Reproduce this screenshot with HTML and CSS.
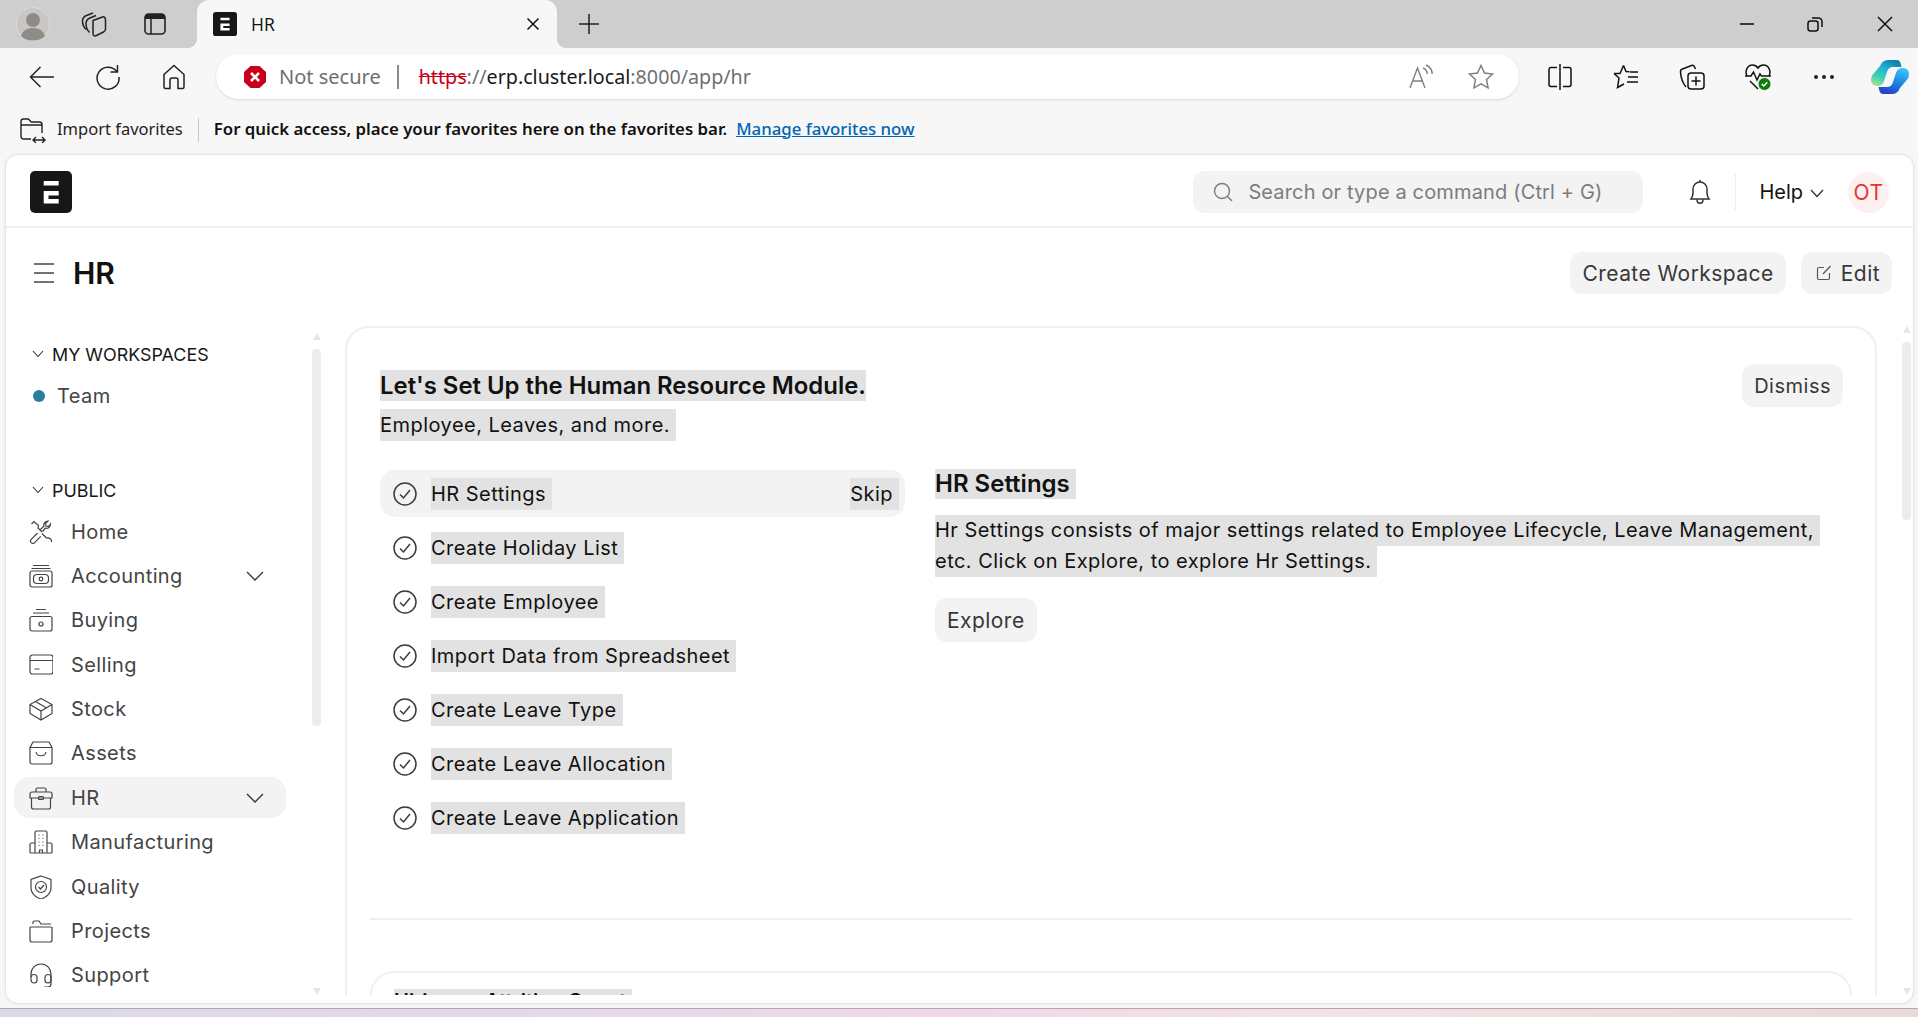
FILE: index.html
```html
<!DOCTYPE html>
<html lang="en">
<head>
    <meta charset="UTF-8">
    <title>HR</title>
    <link rel="stylesheet" href="styles.css">
</head>
<body>

<svg class="sprite" width="0" height="0">
    <defs>
        <linearGradient id="copA" x1="0.7" y1="0" x2="0.2" y2="1">
            <stop offset="0" stop-color="#0f7fa8"/>
            <stop offset="0.35" stop-color="#1fb0d8"/>
            <stop offset="0.75" stop-color="#48d6b0"/>
            <stop offset="1" stop-color="#a6e58a"/>
        </linearGradient>
        <linearGradient id="copB" x1="0.7" y1="0" x2="0.3" y2="1">
            <stop offset="0" stop-color="#3cc4f4"/>
            <stop offset="0.55" stop-color="#1c7fe0"/>
            <stop offset="1" stop-color="#2a3fc8"/>
        </linearGradient>
    </defs>
</svg>

<!-- browser chrome -->
<div class="tabstrip">
    <div class="strip-btn">
        <svg class="avatar" width="34" height="34" viewBox="0 0 34 34"><circle cx="17" cy="17" r="16.5" fill="#c9c7c3" stroke="#dcdad6"/><circle cx="17" cy="13" r="7" fill="#8f8c87"/><path d="M5 29c2-6 7-8 12-8s10 2 12 8c-3 3-7 4.500-12 4.500S8 32 5 29z" fill="#8f8c87"/></svg>
    </div>
    <div class="strip-btn">
        <svg width="26" height="28" viewBox="0 0 26 28" fill="none" stroke="#222" stroke-width="1.500"><path d="M5 19.500C2.500 17 1.500 14 1.500 11c0-3 1.500-4.500 4-5.500L12 3"/><path d="M8.500 22.500C6 20 5 17 5 13.500c0-3 1.500-4.500 4-5.500l6-2.500"/><path d="M12 10.500 21.500 7c1.500-.5 3 .5 3 2.500V19c0 1.500-.8 2.500-2 3l-7 3.500c-2 1-3.500 0-3.500-2z"/></svg>
    </div>
    <div class="strip-btn">
        <svg width="22" height="22" viewBox="0 0 22 22"><rect x="1" y="1" width="20" height="20" rx="3.500" fill="none" stroke="#222" stroke-width="1.600"/><path d="M1 4.500A3.500 3.500 0 0 1 4.500 1h13A3.500 3.500 0 0 1 21 4.500V6H1z" fill="#222"/><path d="M7 6v15" stroke="#222" stroke-width="1.500"/></svg>
    </div>
    <div class="tab">
        <svg class="tab-logo" width="24" height="24" viewBox="0 0 42 42"><rect width="42" height="42" rx="5" fill="#171717"/><path d="M13 10h16v4.500H13zM13 20h16v4.500H18v3.500h11v4.500H13z" fill="#fff"/></svg>
        <span class="tab-title">HR</span>
        <svg class="tab-close" width="14" height="14" viewBox="0 0 14 14"><path d="M1.500 1.500l11 11M12.500 1.500l-11 11" stroke="#111" stroke-width="1.500"/></svg>
    </div>
    <div class="new-tab">
        <svg width="20" height="20" viewBox="0 0 20 20"><path d="M10 0v20M0 10h20" stroke="#222" stroke-width="1.500"/></svg>
    </div>
    <div class="win-controls">
        <div class="win-btn"><svg width="16" height="16" viewBox="0 0 16 16"><path d="M1 8h14" stroke="#111" stroke-width="1.600"/></svg></div>
        <div class="win-btn"><svg width="16" height="16" viewBox="0 0 16 16" fill="none" stroke="#111" stroke-width="1.500"><rect x="1" y="5" width="10" height="10" rx="2.500"/><path d="M5 2h6.500A3.500 3.500 0 0 1 15 5.500V11"/></svg></div>
        <div class="win-btn win-close"><svg width="16" height="16" viewBox="0 0 16 16"><path d="M1 1l14 14M15 1L1 15" stroke="#111" stroke-width="1.500"/></svg></div>
    </div>
</div>

<div class="toolbar">
    <div class="tool-btn">
        <svg width="26" height="24" viewBox="0 0 26 24" fill="none" stroke="#222" stroke-width="1.500"><path d="M25 12H1.500M11.500 2 1.500 12l10 10"/></svg>
    </div>
    <div class="tool-btn">
        <svg width="26" height="26" viewBox="0 0 26 26" fill="none" stroke="#222" stroke-width="1.500"><path d="M21.800 7.500A11 11 0 1 0 24 13"/><path d="M22.500 1v7h-7"/></svg>
    </div>
    <div class="tool-btn">
        <svg width="24" height="26" viewBox="0 0 24 26" fill="none" stroke="#222" stroke-width="1.500"><path d="M2 10.500 12 1.500l10 9V23a1.500 1.500 0 0 1-1.500 1.500H16V16a2 2 0 0 0-2-2h-4a2 2 0 0 0-2 2v8.500H3.500A1.500 1.500 0 0 1 2 23z"/></svg>
    </div>
    <div class="address">
        <svg class="sec-icon" width="22" height="24" viewBox="0 0 22 24"><path d="M6.500 1h9L22 7v10l-6.500 6h-9L0 17V7z" fill="#c8001a"/><path d="M7 8l8 8M15 8l-8 8" stroke="#fff" stroke-width="2.600"/></svg>
        <span class="sec-text">Not secure</span>
        <span class="addr-sep"></span>
        <span class="url"><span class="url-https">https</span><span class="url-dim">://</span>erp.cluster.local<span class="url-dim">:8000/app/hr</span></span>
        <div class="addr-icons">
            <svg width="26" height="26" viewBox="0 0 26 26" fill="none" stroke="#808080" stroke-width="1.400"><path d="M1 24 8.500 4l7.500 20M3.800 17h9.400"/><path d="M14 4c2.500 1 4 3 4.300 6M17 1c3.500 1.500 6 4.500 6.300 9"/></svg>
            <svg width="26" height="26" viewBox="0 0 26 26" fill="none" stroke="#808080" stroke-width="1.500"><path d="M13 1.500l3.500 7.500 8 1-6 5.500 1.600 8.300-7.100-4-7.100 4 1.600-8.300-6-5.500 8-1z"/></svg>
        </div>
    </div>
    <div class="tool-icons">
        <div class="tool-icon"><svg width="24" height="26" viewBox="0 0 24 26" fill="none" stroke="#111" stroke-width="1.500"><path d="M9 3.500H3A2 2 0 0 0 1 5.500v15a2 2 0 0 0 2 2h6M15 3.500h6a2 2 0 0 1 2 2v15a2 2 0 0 1-2 2h-6"/><path d="M12 0v26"/></svg></div>
        <div class="tool-icon"><svg width="26" height="26" viewBox="0 0 26 26" fill="none" stroke="#111" stroke-width="1.500"><path d="M10.500 1.500l2.500 6 3.500.3M1 9.500l6 .1L10.500 1.500M1 9.500l5 4.500-1.500 9.500 6.500-3.500"/><path d="M17 8h8M15 13h10M14 18h11"/></svg></div>
        <div class="tool-icon"><svg width="26" height="28" viewBox="0 0 26 28" fill="none" stroke="#111" stroke-width="1.500"><path d="M7 24C4.500 21 2 16 1.500 9c-.2-1.500.5-2.500 2-3l9-3.500c1.200-.4 2.200 0 2.800 1l1.200 2.500"/><rect x="9" y="10" width="16" height="16" rx="3"/><path d="M17 13.500v9M12.500 18h9"/></svg></div>
        <div class="tool-icon"><svg width="26" height="28" viewBox="0 0 26 28" fill="none"><path d="M2 13C-.5 8 2.500 2 7.500 2c2.500 0 4.500 1.500 5.500 3 1-1.500 3-3 5.500-3 5 0 8 6 5.500 11M5 18l8 8" stroke="#111" stroke-width="1.500"/><path d="M0 13h6l2.500-4 3.500 8 3-6 1.500 2H26" stroke="#111" stroke-width="1.500"/><circle cx="19.500" cy="21" r="6.500" fill="#107c10" stroke="#f7f7f7" stroke-width="1"/><path d="M16.800 21l2 2 3.500-3.800" stroke="#fff" stroke-width="1.500"/></svg></div>
        <div class="tool-icon"><svg width="22" height="6" viewBox="0 0 22 6" fill="#222"><circle cx="3" cy="3" r="2"/><circle cx="11" cy="3" r="2"/><circle cx="19" cy="3" r="2"/></svg></div>
        <div class="tool-icon"><svg width="38" height="36" viewBox="0 0 38 36"><path d="M29 29c-1.500 4-4.500 6-8 6h-9c-1.500 0-3-1-3.500-3l-1-4H16c3 0 5-1.500 6-5l3-9c1-3 3-5 7-5 4 0 6 3 6 6 0 1.500-.5 3-1 4.500z" fill="url(#copB)"/><path d="M9 7C10.500 3 13.500 1 17 1h9c1.500 0 3 1 3.500 3l1 4H22c-3 0-5 1.500-6 5l-3 9c-1 3-3 5-7 5-4 0-6-3-6-6 0-1.500.5-3 1-4.500z" fill="url(#copA)"/></svg></div>
    </div>
</div>

<div class="favbar">
    <svg width="26" height="26" viewBox="0 0 26 26" fill="none" stroke="#222" stroke-width="1.400"><path d="M11 22H3.500A2.500 2.500 0 0 1 1 19.500v-15A2.500 2.500 0 0 1 3.500 2h4.800l3 3h8.200A2.500 2.500 0 0 1 22 7.500V16"/><path d="M1 8h21M13 23h12M16 20l-3 3 3 3M22 20l3 3-3 3"/></svg>
    <span class="fav-import">Import favorites</span>
    <span class="fav-sep"></span>
    <b class="fav-msg">For quick access, place your favorites here on the favorites bar.</b>
    <span class="fav-link">Manage favorites now</span>
</div>

<!-- the app -->
<div class="page">
    <div class="navbar">
        <svg class="logo" width="42" height="42" viewBox="0 0 42 42"><rect width="42" height="42" rx="5" fill="#171717"/><path d="M13.700 10h15v4.500h-15zM13.700 20h15v4.500H18.500v3.500h10.200v4.500h-15z" fill="#fff"/></svg>
        <div class="search">
            <svg width="20" height="20" viewBox="0 0 20 20" fill="none" stroke="#7c7c7c" stroke-width="1.400"><circle cx="9" cy="9" r="7.500"/><path d="M14.500 14.500 19 19"/></svg>
            <span>Search or type a command (Ctrl + G)</span>
        </div>
        <svg class="bell" width="22" height="26" viewBox="0 0 22 26" fill="none" stroke="#333" stroke-width="1.500"><path d="M2 20c1.500-2 2-3.500 2-6V10a7 7 0 0 1 14 0v4c0 2.500.5 4 2 6z"/><path d="M8 20.500c0 5 6 5 6 0M11 1v2"/></svg>
        <span class="nav-sep"></span>
        <span class="help">Help</span>
        <svg class="help-chev" width="14" height="9" viewBox="0 0 14 9" fill="none" stroke="#333" stroke-width="1.300"><path d="M1 1l6 6.500L13 1"/></svg>
        <span class="user">OT</span>
    </div>

    <div class="head">
        <svg class="burger" width="20" height="20" viewBox="0 0 20 20" stroke="#444" stroke-width="1.500"><path d="M0 1h20M0 10h20M0 19h20"/></svg>
        <h1 class="head-title">HR</h1>
        <div class="head-actions">
            <span class="btn btn-big">Create Workspace</span>
            <span class="btn btn-big btn-edit">
                <svg width="16" height="16" viewBox="0 0 16 16" fill="none" stroke="#555" stroke-width="1.200"><path d="M8 2.500H3A1.500 1.500 0 0 0 1.500 4v9A1.500 1.500 0 0 0 3 14.500h9a1.500 1.500 0 0 0 1.500-1.500V8M7 9l7.500-8"/></svg>
                Edit
            </span>
        </div>
    </div>

    <div class="body">
        <div class="sidebar">
            <div class="nav">
                <div class="sec-title">
                    <svg width="12" height="8" viewBox="0 0 12 8" fill="none" stroke="#333" stroke-width="1.100"><path d="M1 1l5 5.500L11 1"/></svg>
                    MY WORKSPACES
                </div>
                <div class="team"><i class="team-dot"></i>Team</div>

                <div class="sec-title sec-public">
                    <svg width="12" height="8" viewBox="0 0 12 8" fill="none" stroke="#333" stroke-width="1.100"><path d="M1 1l5 5.500L11 1"/></svg>
                    PUBLIC
                </div>

                <div class="row">
                    <svg class="row-icon" viewBox="0 0 24 24"><path d="M2.500 4 5 1.500l4.500 4-.5 2.500 4 4M11.500 9.500l3.500-3.500c-.8-2.500 1-5 4-5l-2.500 2.500.5 2.500 2.500.5L21.500 4c0 3-2.500 5-5 4l-3 3.500M8.500 13 2.200 19.300a2.400 2.400 0 0 0 3.400 3.400l6.200-6.300M13 13.500l4.500 4.500c2.800-.8 5.300 1 5 4"/></svg>
                    <span>Home</span>
                </div>
                <div class="row">
                    <svg class="row-icon" viewBox="0 0 24 24"><path d="M4 1.500h16M2.500 4.500h19"/><rect x="1" y="7" width="22" height="16" rx="2"/><rect x="4.500" y="10.500" width="15" height="9" rx="3.500"/><circle cx="12" cy="15" r="1.800"/></svg>
                    <span>Accounting</span>
                    <svg class="row-chev" width="18" height="10" viewBox="0 0 18 10" fill="none" stroke="#333" stroke-width="1.300"><path d="M1 1l8 8 8-8"/></svg>
                </div>
                <div class="row">
                    <svg class="row-icon" viewBox="0 0 24 24"><path d="M7 1.500h10M4 5h16"/><rect x="1" y="8.500" width="22" height="14.500" rx="2"/><circle cx="12" cy="16" r="2"/></svg>
                    <span>Buying</span>
                </div>
                <div class="row">
                    <svg class="row-icon" viewBox="0 0 24 24"><rect x="1" y="2" width="23" height="19" rx="2.500"/><path d="M1 7.500h23M5.500 16h5"/></svg>
                    <span>Selling</span>
                </div>
                <div class="row">
                    <svg class="row-icon" viewBox="0 0 24 24"><path d="M12 1.500 23 7.500v9L12 23 1 16.500v-9zM1 7.500l11 6.500 11-6.500M12 14v9M6.500 4.500 17.500 11"/></svg>
                    <span>Stock</span>
                </div>
                <div class="row">
                    <svg class="row-icon" viewBox="0 0 24 24"><path d="M4 1h16l3 5.500V21a2 2 0 0 1-2 2H3a2 2 0 0 1-2-2V6.500zM1 6.500h22M7 11c1 5 9 5 10 0"/></svg>
                    <span>Assets</span>
                </div>
                <div class="row row-active">
                    <svg class="row-icon" viewBox="0 0 24 24"><path d="M7 6V3.500A1.500 1.500 0 0 1 8.500 2h7A1.500 1.500 0 0 1 17 3.500V6"/><path d="M1 8a2 2 0 0 1 2-2h18a2 2 0 0 1 2 2v4H1zM2.500 12v9a2 2 0 0 0 2 2h15a2 2 0 0 0 2-2v-9"/><rect x="9.500" y="10.500" width="5" height="3" rx="1"/></svg>
                    <span>HR</span>
                    <svg class="row-chev" width="18" height="10" viewBox="0 0 18 10" fill="none" stroke="#333" stroke-width="1.300"><path d="M1 1l8 8 8-8"/></svg>
                </div>
                <div class="row">
                    <svg class="row-icon" viewBox="0 0 24 24"><path d="M6 23V2.500A1.500 1.500 0 0 1 7.500 1h9A1.500 1.500 0 0 1 18 2.500V23M1 23h22M6 13H2.500A1.500 1.500 0 0 0 1 14.500V23M18 13h3.500a1.500 1.500 0 0 1 1.500 1.500V23M10.500 23v-3h3v3"/><path d="M9.500 5h1M13.500 5h1M9.500 8.500h1M13.500 8.500h1M9.500 12h1M13.500 12h1M9.500 15.500h1M13.500 15.500h1"/></svg>
                    <span>Manufacturing</span>
                </div>
                <div class="row">
                    <svg class="row-icon" viewBox="0 0 24 24"><path d="M12 1 22 4.500V13c0 5-4 9-10 11C6 22 2 18 2 13V4.500z"/><circle cx="12" cy="12" r="5.500"/><path d="M9.500 12l2 2 3.500-4"/></svg>
                    <span>Quality</span>
                </div>
                <div class="row">
                    <svg class="row-icon" viewBox="0 0 24 24"><path d="M4 5V3.500A1.500 1.500 0 0 1 5.500 2H10l2 3h10M1 8h21.500M1 8v13a2 2 0 0 0 2 2h18a2 2 0 0 0 2-2V8"/></svg>
                    <span>Projects</span>
                </div>
                <div class="row">
                    <svg class="row-icon" viewBox="0 0 24 24"><path d="M2 14V11a10 10 0 0 1 20 0v3M15 24h4a3 3 0 0 0 3-3v-7"/><path d="M2 14.500a3 3 0 0 1 6 0V17a3 3 0 0 1-6 0zM16 14.500a3 3 0 0 1 6 0V17a3 3 0 0 1-6 0z"/></svg>
                    <span>Support</span>
                </div>
            </div>
            <div class="scroll scroll-side">
                <i class="arrow-up"></i>
                <i class="thumb thumb-side"></i>
                <i class="arrow-down"></i>
            </div>
        </div>

        <div class="main">
            <div class="card">
                <div class="onboard">
                    <div class="onboard-head">
                        <div class="onboard-text">
                            <div class="sel onboard-title">Let's Set Up the Human Resource Module.</div>
                            <div class="sel onboard-sub">Employee, Leaves, and more.</div>
                        </div>
                        <span class="btn btn-dismiss">Dismiss</span>
                    </div>
                    <div class="onboard-body">
                        <div class="steps">
                            <div class="step step-active">
                                <svg class="check" viewBox="0 0 24 24"><circle cx="12" cy="12" r="11"/><path d="M7 12.500l3.500 3.500 6.500-8"/></svg>
                                <span class="sel">HR Settings</span>
                                <span class="sel step-skip">Skip</span>
                            </div>
                            <div class="step">
                                <svg class="check" viewBox="0 0 24 24"><circle cx="12" cy="12" r="11"/><path d="M7 12.500l3.500 3.500 6.500-8"/></svg>
                                <span class="sel">Create Holiday List</span>
                            </div>
                            <div class="step">
                                <svg class="check" viewBox="0 0 24 24"><circle cx="12" cy="12" r="11"/><path d="M7 12.500l3.500 3.500 6.500-8"/></svg>
                                <span class="sel">Create Employee</span>
                            </div>
                            <div class="step">
                                <svg class="check" viewBox="0 0 24 24"><circle cx="12" cy="12" r="11"/><path d="M7 12.500l3.500 3.500 6.500-8"/></svg>
                                <span class="sel">Import Data from Spreadsheet</span>
                            </div>
                            <div class="step">
                                <svg class="check" viewBox="0 0 24 24"><circle cx="12" cy="12" r="11"/><path d="M7 12.500l3.500 3.500 6.500-8"/></svg>
                                <span class="sel">Create Leave Type</span>
                            </div>
                            <div class="step">
                                <svg class="check" viewBox="0 0 24 24"><circle cx="12" cy="12" r="11"/><path d="M7 12.500l3.500 3.500 6.500-8"/></svg>
                                <span class="sel">Create Leave Allocation</span>
                            </div>
                            <div class="step">
                                <svg class="check" viewBox="0 0 24 24"><circle cx="12" cy="12" r="11"/><path d="M7 12.500l3.500 3.500 6.500-8"/></svg>
                                <span class="sel">Create Leave Application</span>
                            </div>
                        </div>
                        <div class="detail">
                            <div class="sel detail-title">HR Settings</div>
                            <div class="detail-desc">
                                <div class="sel">Hr Settings consists of major settings related to Employee Lifecycle, Leave Management,</div>
                                <div class="sel">etc. Click on Explore, to explore Hr Settings.</div>
                            </div>
                            <span class="btn btn-big btn-explore">Explore</span>
                        </div>
                    </div>
                </div>
                <div class="divider"></div>
                <div class="chart-card">
                    <div class="sel chart-title">Hiring vs Attrition Count</div>
                </div>
            </div>
            <div class="scroll scroll-main">
                <i class="arrow-up"></i>
                <i class="thumb thumb-main"></i>
                <i class="arrow-down"></i>
            </div>
        </div>
    </div>
</div>

<div class="desktop"></div>

</body>
</html>
```

FILE: styles.css
```css
* {
    box-sizing: border-box;
}

html, body {
    height: 100%;
}

body {
    margin: 0;
    height: 1017px;
    overflow: hidden;
    display: flex;
    flex-direction: column;
    background-color: #f7f7f7;
    color: #111;
    font-family: Inter, "Liberation Sans", sans-serif;
}

svg {
    display: block;
    flex: none;
}

.sprite {
    position: absolute;
}

/* browser chrome */
.tabstrip {
    flex: none;
    height: 48px;
    display: flex;
    align-items: center;
    gap: 11px;
    padding-left: 8px;
    background-color: #cecece;
}

.strip-btn {
    width: 50px;
    display: flex;
    justify-content: center;
}

.tab {
    position: relative;
    align-self: stretch;
    width: 360px;
    margin-left: 6px;
    padding: 0 17px 0 16px;
    display: flex;
    align-items: center;
    background-color: #f7f7f7;
    border-radius: 12px 12px 0 0;
}

.tab::before,
.tab::after {
    content: "";
    position: absolute;
    bottom: 0;
    width: 10px;
    height: 10px;
}

.tab::before {
    left: -10px;
    background: radial-gradient(circle at 0 0, transparent 10px, #f7f7f7 10.500px);
}

.tab::after {
    right: -10px;
    background: radial-gradient(circle at 100% 0, transparent 10px, #f7f7f7 10.500px);
}

.tab-title {
    margin-left: 14px;
    font: 17.500px "Open Sans", sans-serif;
}

.tab-close {
    margin-left: auto;
}

.new-tab {
    width: 22px;
    margin-left: 11px;
}

.win-controls {
    margin-left: auto;
    margin-right: 2px;
    display: flex;
}

.win-btn {
    width: 68px;
    display: flex;
    justify-content: center;
}

.win-close {
    width: 67px;
    justify-content: flex-end;
    padding-right: 23px;
}

.toolbar {
    flex: none;
    height: 57px;
    display: flex;
    align-items: center;
    gap: 16px;
    padding: 0 0 0 17px;
}

.tool-btn {
    width: 50px;
    display: flex;
    justify-content: center;
}

.address {
    width: 1303px;
    height: 45px;
    margin: 0 0 0 1px;
    padding: 0 25px 0 28px;
    display: flex;
    align-items: center;
    background-color: #fff;
    border-radius: 23px;
    box-shadow: 0 1px 3px rgba(0, 0, 0, .12);
}

.sec-text {
    margin-left: 13px;
    color: #6f6f6f;
    font: 20px "Noto Sans", sans-serif;
}

.addr-sep {
    width: 2px;
    height: 24px;
    margin: 0 20px 0 16px;
    background-color: #8a8a8a;
}

.url {
    font: 19.700px "Noto Sans", sans-serif;
    color: #1a1a1a;
}

.url-https {
    color: #c8001a;
    text-decoration: line-through;
}

.url-dim {
    color: #6f6f6f;
}

.addr-icons {
    margin-left: auto;
    display: flex;
    gap: 33px;
}

.tool-icons {
    margin-left: 3px;
    display: flex;
    gap: 22px;
}

.tool-icon {
    width: 44px;
    height: 40px;
    display: flex;
    align-items: center;
    justify-content: center;
}

.favbar {
    flex: none;
    height: 50px;
    padding: 0 0 4px 20px;
    display: flex;
    align-items: center;
    font: 16.800px "Noto Sans", sans-serif;
}

.favbar svg {
    margin-top: 4px;
}

.fav-import {
    margin-left: 11px;
    color: #222;
    font-size: 16.500px;
}

.fav-sep {
    width: 1px;
    height: 24px;
    margin: 4px 15px 0;
    background-color: #c8c8c8;
}

.fav-msg {
    font-weight: 600;
}

.fav-link {
    margin-left: 9px;
    color: #0066b4;
    font-weight: 500;
    text-decoration: underline;
}

/* the app */
.page {
    flex: none;
    height: 848px;
    margin: 0 5px 0 6px;
    display: flex;
    flex-direction: column;
    background-color: #fff;
    border-radius: 12px;
    box-shadow: 0 0 3px rgba(0, 0, 0, .2);
}

.navbar {
    flex: none;
    height: 73px;
    padding: 3px 24px 0;
    display: flex;
    align-items: center;
    border-bottom: 2px solid #efefef;
}

.search {
    width: 450px;
    height: 42px;
    margin-left: auto;
    padding-left: 20px;
    display: flex;
    align-items: center;
    gap: 15px;
    background-color: #f3f3f3;
    border-radius: 12px;
    color: #7c7c7c;
    font-size: 20px;
    letter-spacing: .15px;
}

.bell {
    margin-left: 46px;
}

.nav-sep {
    width: 1px;
    height: 36px;
    margin: 0 23px 0 24px;
    background-color: #ececec;
}

.help {
    font-size: 20px;
}

.help-chev {
    margin: 2px 0 0 7px;
}

.user {
    width: 41px;
    height: 41px;
    margin-left: 24px;
    display: flex;
    align-items: center;
    justify-content: center;
    background-color: #fff0f0;
    border-radius: 50%;
    color: #e03636;
    font-size: 21px;
    letter-spacing: .5px;
}

.head {
    flex: none;
    height: 98px;
    padding: 24px 21px 0 28px;
    display: flex;
    align-items: flex-start;
}

.burger {
    margin-top: 11px;
}

.head-title {
    margin: 0 0 0 19px;
    font-size: 30px;
    font-weight: 600;
    line-height: 42px;
}

.head-actions {
    margin-left: auto;
    display: flex;
    gap: 15px;
}

.btn {
    height: 42px;
    padding: 0 12px;
    display: inline-flex;
    align-items: center;
    background-color: #f3f3f3;
    border-radius: 12px;
    color: #383838;
    font-size: 20px;
    letter-spacing: .5px;
}

.btn-big {
    font-size: 21px;
    letter-spacing: .45px;
}

.btn-edit {
    gap: 9px;
    padding-left: 15px;
}

.body {
    flex: none;
    height: 669px;
    display: flex;
    overflow: hidden;
}

.sidebar {
    flex: none;
    width: 339px;
    display: flex;
    align-items: flex-start;
}

.nav {
    width: 306px;
    padding: 8px 0 0 8px;
    color: #444;
    font-size: 20px;
    letter-spacing: .4px;
}

.sec-title {
    height: 40px;
    padding-left: 18px;
    display: flex;
    align-items: center;
    gap: 8px;
    color: #171717;
    font-size: 17.900px;
    letter-spacing: 0;
}

.sec-public {
    height: 42px;
    margin-top: 51px;
}

.team {
    height: 44px;
    padding-left: 19px;
    display: flex;
    align-items: center;
    gap: 12px;
}

.team-dot {
    width: 12px;
    height: 12px;
    border-radius: 50%;
    background-color: #2a7f9e;
}

.row {
    width: 272px;
    height: 41px;
    margin-bottom: 3.400px;
    padding: 0 22px 0 15px;
    display: flex;
    align-items: center;
    gap: 18px;
    border-radius: 15px;
}

.row-active {
    background-color: #f3f3f3;
}

.row-icon {
    width: 24px;
    height: 24px;
    fill: none;
    stroke: #444;
    stroke-width: 1.200;
}

.row-chev {
    margin-left: auto;
}

.scroll {
    flex: none;
    width: 9px;
    display: flex;
    flex-direction: column;
    align-items: center;
}

.scroll-side {
    height: 662px;
    margin-top: 7px;
}

.scroll-main {
    height: 669px;
    margin-left: 25px;
}

.arrow-up {
    width: 0;
    height: 0;
    border: solid transparent;
    border-width: 0 4.500px 7px;
    border-bottom-color: #e6e6e6;
}

.arrow-down {
    width: 0;
    height: 0;
    margin-top: auto;
    border: solid transparent;
    border-width: 7px 4.500px 0;
    border-top-color: #e6e6e6;
}

.thumb {
    width: 9px;
    border-radius: 4px;
    background-color: #ececec;
}

.thumb-side {
    height: 377px;
    margin-top: 9px;
}

.thumb-main {
    height: 178px;
    margin-top: 9px;
}

.main {
    flex: 1;
    min-width: 0;
    display: flex;
    align-items: flex-start;
}

.card {
    flex: none;
    width: 1532px;
    height: 800px;
    padding: 36px 23px 0;
    border: 2px solid #efefef;
    border-radius: 24px;
}

.onboard {
    padding: 0 9px 0 10px;
    font-size: 20px;
    letter-spacing: .47px;
}

.onboard-head {
    display: flex;
    justify-content: space-between;
    align-items: flex-start;
}

.onboard-text {
    padding-top: 6px;
}

.sel {
    display: block;
    width: fit-content;
    padding-right: 6px;
    background-color: #e2e2e2;
    line-height: 32px;
    color: #111;
}

.onboard-title {
    padding-right: 0;
    line-height: 31px;
    font-size: 23.900px;
    font-weight: 600;
    letter-spacing: 0;
}

.onboard-sub {
    margin-top: 8px;
}

.btn-dismiss {
    height: 43px;
}

.onboard-body {
    margin-top: 29px;
    display: flex;
    gap: 30px;
}

.steps {
    flex: none;
    width: 525px;
    display: flex;
    flex-direction: column;
    gap: 7px;
}

.step {
    height: 47px;
    padding: 0 6px 0 13px;
    display: flex;
    align-items: center;
    gap: 14px;
    border-radius: 15px;
}

.step-active {
    background-color: #f3f3f3;
}

.step-skip {
    margin-left: auto;
}

.check {
    width: 24px;
    height: 24px;
    fill: none;
    stroke: #3c3c3c;
    stroke-width: 1.500;
}

.detail {
    flex: 1;
    margin-top: -1px;
}

.detail-title {
    line-height: 30px;
    font-size: 24px;
    font-weight: 600;
    letter-spacing: 0;
}

.detail-desc {
    margin-top: 16px;
}

.detail-desc .sel {
    line-height: 31px;
}

.btn-explore {
    height: 44px;
    margin-top: 21px;
}

.divider {
    height: 2px;
    margin-top: 77px;
    background-color: #efefef;
}

.chart-card {
    height: 300px;
    margin-top: 51px;
    padding: 16px 22px;
    border: 2px solid #efefef;
    border-radius: 24px;
}

.chart-title {
    padding-right: 6px;
    line-height: 24px;
    font-size: 20px;
    font-weight: 600;
}

.desktop {
    flex: 1;
    margin-top: 5px;
    border-top: 1px solid #b0a8b0;
    background: linear-gradient(90deg, #dcd8e6, #e2d8ea 25%, #f0d8e8 48%, #f4e2e4 70%, #ebd9d9);
}
```
